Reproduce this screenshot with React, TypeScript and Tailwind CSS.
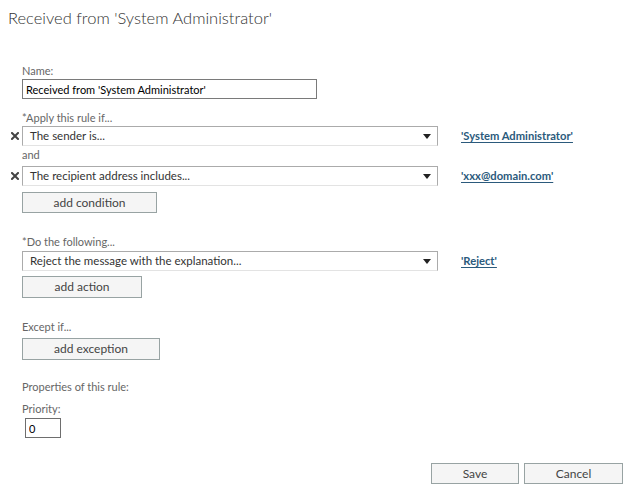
import { ReactNode } from "react";

const font = { fontFamily: "Lato, 'Open Sans', sans-serif" };

function RemoveIcon() {
    return (
        <svg width="8" height="8" viewBox="0 0 8 8" className="block">
            <path d="M1 1 L7 7 M7 1 L1 7" stroke="#444" strokeWidth="2" strokeLinecap="square" />
        </svg>
    );
}

function Dropdown({ text }: { text: string }) {
    return (
        <div className="flex h-[20px] w-[416px] items-center justify-between border border-[#ababab] border-b-[#e3e3e3] bg-white pl-[7px] pr-[6px] text-[11.5px] text-[#333]">
            <span>{text}</span>
            <svg width="8" height="5" viewBox="0 0 8 5">
                <path d="M0 0 H8 L4 5 Z" fill="#222" />
            </svg>
        </div>
    );
}

function Row({ removable, text, link }: { removable?: boolean; text: string; link?: string }) {
    return (
        <div className="flex items-center">
            <div className="flex w-[14px] justify-center pr-[1px]">{removable && <RemoveIcon />}</div>
            <Dropdown text={text} />
            {link && (
                <a href="#" className="ml-[23px] text-[11.2px] font-bold text-[#2b5a7c] underline underline-offset-2">
                    {link}
                </a>
            )}
        </div>
    );
}

function GrayButton({ children, w, h = "h-[21px]" }: { children: ReactNode; w: string; h?: string }) {
    return (
        <button className={`${w} ${h} border border-[#98a3a3] bg-[#f5f5f5] text-[12px] text-[#444]`}>
            {children}
        </button>
    );
}

export default function App() {
    return (
        <div className="h-[491px] w-[632px] bg-white" style={font}>
            <h1 className="pl-[8px] pt-[6px] text-[16.5px] font-light leading-[24px] text-[#333]">
                Received from 'System Administrator'
            </h1>

            <div className="pl-[8px] pt-[33px]">
                <div className="pl-[14px] text-[11px] leading-[16px] text-[#666]">
                    <div>Name:</div>
                    <input
                        defaultValue="Received from 'System Administrator'"
                        className="block h-[20px] w-[295px] border border-[#7a7a7a] px-[3px] text-[11px] text-black outline-none"
                    />
                    <div className="mt-[11px]">*Apply this rule if...</div>
                </div>

                <Row removable text="The sender is..." link="'System Administrator'" />
                <div className="pl-[14px] text-[11px] leading-[16px] text-[#666]">
                    <div className="mt-[1px]">and</div>
                </div>
                <div className="mt-[3px]">
                    <Row removable text="The recipient address includes..." link="'xxx@domain.com'" />
                </div>

                <div className="pl-[14px] text-[11px] leading-[16px] text-[#666]">
                    <div className="mt-[6px]">
                        <GrayButton w="w-[135px]">add condition</GrayButton>
                    </div>
                    <div className="mt-[21px]">*Do the following...</div>
                </div>
                <div className="mt-[1px]">
                    <Row text="Reject the message with the explanation..." link="'Reject'" />
                </div>

                <div className="pl-[14px] text-[11px] leading-[16px] text-[#666]">
                    <div className="mt-[5px]">
                        <GrayButton w="w-[120px]" h="h-[22px]">add action</GrayButton>
                    </div>
                    <div className="mt-[21px]">Except if...</div>
                    <div className="mt-[3px]">
                        <GrayButton w="w-[138px]" h="h-[22px]">add exception</GrayButton>
                    </div>
                    <div className="mt-[19px]">Properties of this rule:</div>
                    <div className="mt-[6px]">Priority:</div>
                    <input
                        defaultValue="0"
                        className="ml-[3px] mt-[1px] block h-[20px] w-[36px] border border-[#6e6e6e] px-[3px] text-[11px] text-black outline-none"
                    />
                </div>

                <div className="mt-[25px] flex justify-end gap-[5px] pr-[9px]">
                    <GrayButton w="w-[88px]">Save</GrayButton>
                    <GrayButton w="w-[99px]">Cancel</GrayButton>
                </div>
            </div>
        </div>
    );
}
